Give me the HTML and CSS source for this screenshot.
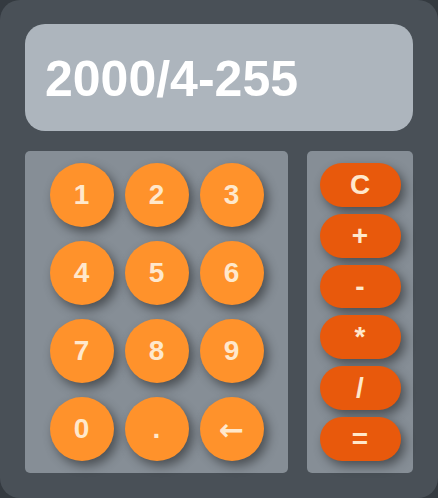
FILE: index.html
```html
<!DOCTYPE html>
<html lang="en">
<head>
    <meta charset="UTF-8">
    <meta name="viewport" content="width=device-width, initial-scale=1.0">
    <title>Calculator</title>
    <link rel="stylesheet" href="styles.css">
</head>
<body>
    <div class="calculator">
        <div class="display" id="display">2000/4-255</div>
        <div class="keys">
            <div class="numbers">
                <button class="num">1</button>
                <button class="num">2</button>
                <button class="num">3</button>
                <button class="num">4</button>
                <button class="num">5</button>
                <button class="num">6</button>
                <button class="num">7</button>
                <button class="num">8</button>
                <button class="num">9</button>
                <button class="num">0</button>
                <button class="num">.</button>
                <button class="num back">&larr;</button>
            </div>
            <div class="operators">
                <button class="op">C</button>
                <button class="op">+</button>
                <button class="op">-</button>
                <button class="op">*</button>
                <button class="op">/</button>
                <button class="op">=</button>
            </div>
        </div>
    </div>
</body>
</html>
```

FILE: styles.css
```css
body {
    margin: 0;
    background-color: #343a40;
    font-family: "Liberation Sans", Arial, sans-serif;
}
.calculator {
    box-sizing: border-box;
    width: 438px;
    height: 498px;
    padding: 24px 25px 25px;
    background-color: #495057;
    border-radius: 20px;
}
.display {
    box-sizing: border-box;
    height: 107px;
    display: flex;
    align-items: center;
    padding-left: 20px;
    padding-top: 2px;
    background-color: #adb5bd;
    border-radius: 20px;
    color: #ffffff;
    font-size: 50px;
    font-weight: bold;
}
.keys {
    display: flex;
    gap: 19px;
    margin-top: 20px;
    height: 322px;
}
.numbers {
    width: 263px;
    box-sizing: border-box;
    padding: 12px 0;
    display: grid;
    grid-template-columns: repeat(3, 64px);
    grid-auto-rows: 64px;
    column-gap: 11px;
    row-gap: 14px;
    justify-content: center;
    background-color: #868e96;
    border-radius: 5px;
}
.operators {
    width: 106px;
    box-sizing: border-box;
    padding: 12px 0;
    display: flex;
    flex-direction: column;
    align-items: center;
    gap: 7px;
    background-color: #868e96;
    border-radius: 5px;
}
button {
    border: none;
    padding: 0;
    font-family: inherit;
    font-weight: bold;
    font-size: 28px;
    color: #ffe8cc;
    cursor: pointer;
    box-shadow: 4px 5px 11px rgba(0, 0, 0, 0.45);
}
.num {
    width: 64px;
    height: 64px;
    border-radius: 50%;
    background-color: #ff922b;
}
.num.back {
    font-family: "DejaVu Sans", sans-serif;
    font-size: 30px;
}
.op {
    width: 81px;
    height: 44px;
    border-radius: 22px;
    background-color: #e8590c;
}
```
